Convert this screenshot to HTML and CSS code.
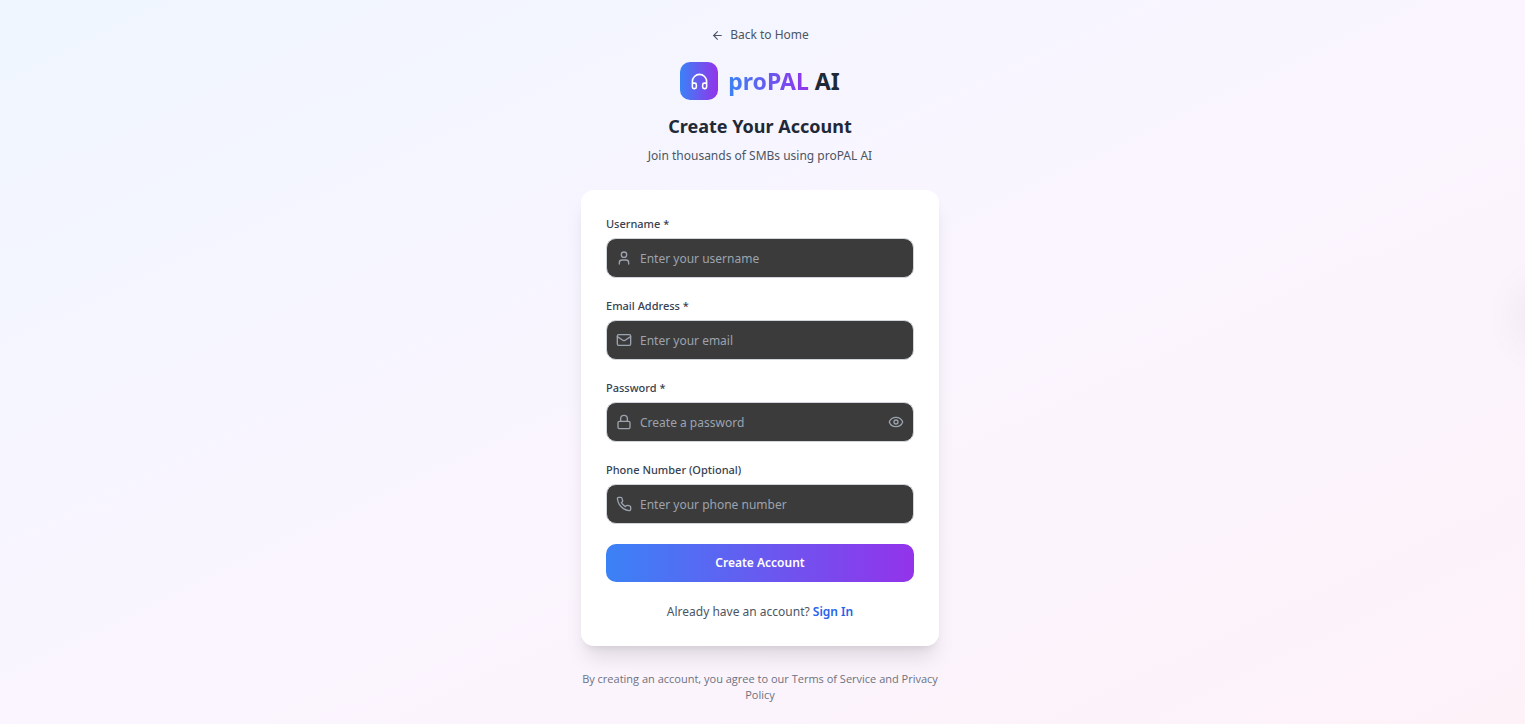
FILE: index.html
```html
<!DOCTYPE html>
<html lang="en">
<head>
<meta charset="utf-8">
<meta name="viewport" content="width=device-width, initial-scale=1">
<title>Create Your Account - proPAL AI</title>
<link rel="stylesheet" href="styles.css">
</head>
<body>
<div class="page">
  <main class="signup">
    <header class="intro">
      <a class="back" href="#">
        <svg class="icon icon-sm" viewBox="0 0 24 24" aria-hidden="true"><path d="m12 19-7-7 7-7"/><path d="M19 12H5"/></svg>
        Back to Home
      </a>
      <div class="brand">
        <span class="brand-mark">
          <svg class="icon icon-md" viewBox="0 0 24 24" aria-hidden="true"><path d="M3 14h3a2 2 0 0 1 2 2v3a2 2 0 0 1-2 2H5a2 2 0 0 1-2-2v-7a9 9 0 0 1 18 0v7a2 2 0 0 1-2 2h-1a2 2 0 0 1-2-2v-3a2 2 0 0 1 2-2h3"/></svg>
        </span>
        <span class="brand-name"><span class="brand-accent">proPAL</span> AI</span>
      </div>
      <h1 class="title">Create Your Account</h1>
      <p class="subtitle">Join thousands of SMBs using proPAL AI</p>
    </header>

    <section class="card">
      <form class="form">
        <div class="field">
          <label class="label" for="username">Username *</label>
          <div class="control">
            <svg class="icon icon-field" viewBox="0 0 24 24" aria-hidden="true"><path d="M19 21v-2a4 4 0 0 0-4-4H9a4 4 0 0 0-4 4v2"/><circle cx="12" cy="7" r="4"/></svg>
            <input class="input" id="username" type="text" placeholder="Enter your username">
          </div>
        </div>
        <div class="field">
          <label class="label" for="email">Email Address *</label>
          <div class="control">
            <svg class="icon icon-field" viewBox="0 0 24 24" aria-hidden="true"><rect width="20" height="16" x="2" y="4" rx="2"/><path d="m22 7-8.97 5.7a1.94 1.94 0 0 1-2.06 0L2 7"/></svg>
            <input class="input" id="email" type="email" placeholder="Enter your email">
          </div>
        </div>
        <div class="field">
          <label class="label" for="password">Password *</label>
          <div class="control">
            <svg class="icon icon-field" viewBox="0 0 24 24" aria-hidden="true"><rect width="18" height="11" x="3" y="11" rx="2"/><path d="M7 11V7a5 5 0 0 1 10 0v4"/></svg>
            <input class="input" id="password" type="password" placeholder="Create a password">
            <button class="reveal" type="button" aria-label="Show password">
              <svg class="icon icon-field" viewBox="0 0 24 24" aria-hidden="true"><path d="M2.062 12.348a1 1 0 0 1 0-.696 10.75 10.75 0 0 1 19.876 0 1 1 0 0 1 0 .696 10.75 10.75 0 0 1-19.876 0"/><circle cx="12" cy="12" r="3"/></svg>
            </button>
          </div>
        </div>
        <div class="field">
          <label class="label" for="phone">Phone Number (Optional)</label>
          <div class="control">
            <svg class="icon icon-field" viewBox="0 0 24 24" aria-hidden="true"><path d="M22 16.92v3a2 2 0 0 1-2.18 2 19.79 19.79 0 0 1-8.63-3.07 19.5 19.5 0 0 1-6-6 19.79 19.79 0 0 1-3.07-8.67A2 2 0 0 1 4.11 2h3a2 2 0 0 1 2 1.72 12.84 12.84 0 0 0 .7 2.81 2 2 0 0 1-.45 2.11L8.09 9.91a16 16 0 0 0 6 6l1.27-1.27a2 2 0 0 1 2.11-.45 12.84 12.84 0 0 0 2.81.7A2 2 0 0 1 22 16.92z"/></svg>
            <input class="input" id="phone" type="tel" placeholder="Enter your phone number">
          </div>
        </div>
        <button class="submit" type="submit">Create Account</button>
      </form>
      <p class="signin">Already have an account? <a class="signin-link" href="#">Sign In</a></p>
    </section>

    <p class="legal">By creating an account, you agree to our Terms of Service and Privacy Policy</p>
  </main>
  <div class="side-glow"></div>
</div>
</body>
</html>
```
FILE: styles.css
```css
* {
  box-sizing: border-box;
}

body {
  margin: 0;
  font-family: "Noto Sans", "Open Sans", sans-serif;
  font-size: 12px;
  line-height: 20px;
  color: #4b5563;
}

h1,
p {
  margin: 0;
}

a {
  color: inherit;
  text-decoration: none;
}

.page {
  position: relative;
  display: flex;
  justify-content: center;
  min-height: 100vh;
  padding: 25px 21px 20px 16px;
  overflow: hidden;
  background: linear-gradient(to bottom right, #eff6ff, #faf5ff, #fdf2f8);
}

.signup {
  display: flex;
  flex-direction: column;
  width: 100%;
  max-width: 358px;
}

.intro {
  display: flex;
  flex-direction: column;
  align-items: center;
  text-align: center;
}

.icon {
  flex: none;
  fill: none;
  stroke: currentColor;
  stroke-width: 2;
  stroke-linecap: round;
  stroke-linejoin: round;
}

.icon-sm {
  width: 13px;
  height: 13px;
}

.icon-md {
  width: 19px;
  height: 19px;
}

.icon-field {
  width: 16px;
  height: 16px;
  color: #9ca3af;
}

.back {
  display: flex;
  align-items: center;
  gap: 6px;
}

.brand {
  display: flex;
  align-items: center;
  gap: 10px;
  margin-top: 17px;
}

.brand-mark {
  display: grid;
  place-items: center;
  width: 38px;
  height: 38px;
  border-radius: 10px;
  color: #fff;
  background: linear-gradient(to right, #3b82f6, #9333ea);
}

.brand-name {
  font-size: 23px;
  font-weight: 700;
  line-height: 32px;
  color: #1f2937;
}

.brand-accent {
  color: transparent;
  background: linear-gradient(to right, #3b82f6, #9333ea);
  -webkit-background-clip: text;
  background-clip: text;
}

.title {
  margin-top: 14px;
  font-size: 18px;
  font-weight: 700;
  line-height: 24px;
  color: #1f2937;
}

.subtitle {
  margin-top: 8px;
}

.card {
  margin-top: 24px;
  padding: 26px 25px 25px;
  border-radius: 13px;
  background: #fff;
  box-shadow: 0 16px 20px -4px rgba(0, 0, 0, 0.1), 0 6px 8px -5px rgba(0, 0, 0, 0.1);
}

.form {
  display: flex;
  flex-direction: column;
  gap: 20px;
}

.field {
  display: flex;
  flex-direction: column;
  gap: 6px;
}

.label {
  font-size: 11px;
  font-weight: 500;
  line-height: 16px;
  color: #374151;
}

.control {
  display: flex;
  align-items: center;
  height: 40px;
  padding: 0 9px;
  gap: 8px;
  border: 1px solid #d1d5db;
  border-radius: 10px;
  background: #3b3b3b;
}

.input {
  flex: 1;
  min-width: 0;
  height: 100%;
  padding: 0;
  border: 0;
  outline: 0;
  font: inherit;
  color: #fff;
  background: transparent;
}

.input::placeholder {
  color: #9ca3af;
  opacity: 1;
}

.reveal {
  display: grid;
  padding: 0;
  border: 0;
  background: transparent;
  cursor: pointer;
}

.submit {
  height: 38px;
  border: 0;
  border-radius: 10px;
  font: inherit;
  font-weight: 600;
  color: #fff;
  background: linear-gradient(to right, #3b82f6, #9333ea);
  cursor: pointer;
}

.signin {
  margin-top: 21px;
  line-height: 18px;
  text-align: center;
}

.signin-link {
  font-weight: 600;
  color: #2563eb;
}

.legal {
  margin-top: 25px;
  font-family: "Open Sans", sans-serif;
  font-size: 11px;
  line-height: 16px;
  text-align: center;
  color: #6b7280;
}

.side-glow {
  position: absolute;
  top: 290px;
  right: -48px;
  width: 45px;
  height: 45px;
  border-radius: 50%;
  box-shadow: 0 4px 48px rgba(0, 0, 0, 0.12);
}
```
